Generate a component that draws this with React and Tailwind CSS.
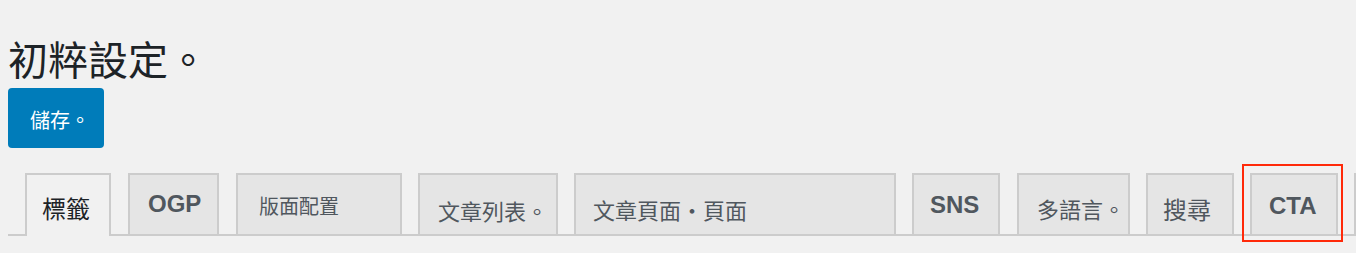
import React from "react";

const cjk = { fontFamily: '"Noto Sans CJK TC", "Noto Sans CJK SC", sans-serif' };
const lat = { fontFamily: '"Liberation Sans", Arial, sans-serif' };

function Tab({ children, w, pl, pt, size, bold, latin, active, ml = "ml-[16px]", overlay }) {
  return (
    <div
      className={`relative shrink-0 ${ml} ${w} ${pl} ${pt} border-2 border-b-0 border-[#cccccc] ${
        active ? "h-[63px] -mb-[2px] bg-[#f1f1f1] text-[#1d2327]" : "h-[61px] bg-[#e5e5e5] text-[#50575e]"
      } ${size} ${bold ? "font-bold" : ""} leading-none whitespace-nowrap`}
      style={latin ? lat : cjk}
    >
      {children}
      {overlay && (
        <div className="absolute left-[-10px] top-[-11px] w-[101px] h-[78px] border-2 border-[#ff2a0a] pointer-events-none" />
      )}
    </div>
  );
}

export default function App() {
  return (
    <div className="w-[1356px] h-[253px] bg-[#f1f1f1] overflow-hidden pl-2 pt-[38px]">
      <h1 className="text-[40px] leading-none text-[#1d2327] font-normal" style={cjk}>
        初粹設定。
      </h1>
      <button
        className="mt-[10px] w-[96px] h-[60px] rounded-[4px] bg-[#007cba] text-white text-[20px] leading-none flex items-center pl-[22px] pt-[3px]"
        style={cjk}
      >
        儲存。
      </button>
      <nav className="mt-[25px] flex items-end border-b-2 border-[#cccccc]">
        <Tab active ml="ml-[17px]" w="w-[86px]" pl="pl-[15px]" pt="pt-[21px]" size="text-[24px]">
          標籤
        </Tab>
        <Tab ml="ml-[17px]" w="w-[91px]" pl="pl-[18px]" pt="pt-[17px]" size="text-[24px]" bold latin>
          OGP
        </Tab>
        <Tab ml="ml-[17px]" w="w-[166px]" pl="pl-[21px]" pt="pt-[21px]" size="text-[20px]">
          版面配置
        </Tab>
        <Tab w="w-[140px]" pl="pl-[18px]" pt="pt-[24px]" size="text-[22px]">
          文章列表。
        </Tab>
        <Tab w="w-[322px]" pl="pl-[17px]" pt="pt-[23px]" size="text-[22px]">
          文章頁面・頁面
        </Tab>
        <Tab w="w-[88px]" pl="pl-[16px]" pt="pt-[18px]" size="text-[24px]" bold latin>
          SNS
        </Tab>
        <Tab ml="ml-[17px]" w="w-[113px]" pl="pl-[18px]" pt="pt-[22px]" size="text-[22px]">
          多語言。
        </Tab>
        <Tab w="w-[88px]" pl="pl-[15px]" pt="pt-[22px]" size="text-[24px]">
          搜尋
        </Tab>
        <Tab w="w-[88px]" pl="pl-[17px]" pt="pt-[19px]" size="text-[24px]" bold latin overlay>
          CTA
        </Tab>
        <Tab w="w-[100px]" pl="pl-[18px]" pt="pt-[22px]" size="text-[22px]">
          {" "}
        </Tab>
      </nav>
    </div>
  );
}
